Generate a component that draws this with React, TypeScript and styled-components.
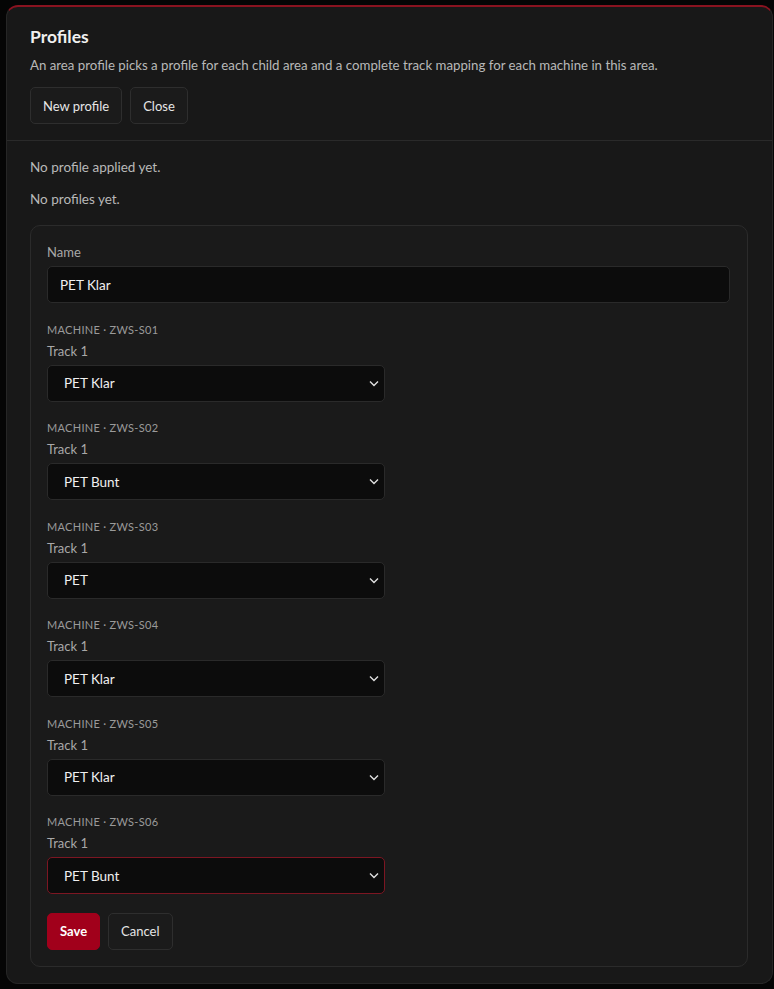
import React from "react";
import styled, { createGlobalStyle } from "styled-components";

const GlobalStyle = createGlobalStyle`
  html, body {
    margin: 0;
    padding: 0;
    background: #050505;
    font-family: Lato, "Noto Sans", sans-serif;
    -webkit-font-smoothing: antialiased;
  }
  * { box-sizing: border-box; }
`;

const Backdrop = styled.div`
  min-height: 989px;
  padding: 5px 1px 6px 6px;
  background: #050505;
`;

const Modal = styled.div`
  background: #181818;
  border: 1px solid #262626;
  border-top: 2px solid #8a1320;
  border-radius: 12px;
  color: #e8e8e8;
`;

const Header = styled.div`
  padding: 18px 23px 16px;
  border-bottom: 1px solid #2a2a2a;
`;

const Title = styled.h2`
  margin: 0;
  font-size: 17.5px;
  line-height: 24px;
  font-weight: 700;
  color: #f0f0f0;
`;

const Description = styled.p`
  margin: 6px 0 12px;
  font-size: 13.25px;
  line-height: 20px;
  color: #b8b8b8;
`;

const Row = styled.div`
  display: flex;
  gap: 8px;
`;

const Button = styled.button<{ $primary?: boolean }>`
  height: 37px;
  padding: 0 12px;
  border-radius: 5px;
  font-family: inherit;
  font-size: 13px;
  font-weight: ${(p) => (p.$primary ? 700 : 400)};
  color: ${(p) => (p.$primary ? "#fff" : "#e6e6e6")};
  background: ${(p) => (p.$primary ? "#a1001b" : "#1b1b1b")};
  border: 1px solid ${(p) => (p.$primary ? "#a1001b" : "#2e2e2e")};
  cursor: pointer;
`;

const Body = styled.div`
  padding: 16px 24px 16px 23px;
  display: flex;
  flex-direction: column;
  gap: 12px;
`;

const Muted = styled.p`
  margin: 0;
  font-size: 13.5px;
  line-height: 20px;
  color: #b8b8b8;
`;

const Card = styled.div`
  margin-top: 4px;
  background: #1a1a1a;
  border: 1px solid #2b2b2b;
  border-radius: 10px;
  padding: 17px 17px 16px 16px;
  display: flex;
  flex-direction: column;
  gap: 18.5px;
`;

const Field = styled.div`
  display: flex;
  flex-direction: column;
  gap: 5px;
`;

const MachineLabel = styled.div`
  font-size: 11px;
  line-height: 16px;
  letter-spacing: 0.3px;
  text-transform: uppercase;
  color: #9a9a9a;
  margin-bottom: -1px;
`;

const Label = styled.label`
  font-size: 13px;
  line-height: 18px;
  color: #a8a8a8;
`;

const Input = styled.input`
  height: 37px;
  width: 100%;
  padding: 0 12px;
  background: #0c0c0c;
  border: 1px solid #2a2a2a;
  border-radius: 5px;
  color: #f0f0f0;
  font-family: inherit;
  font-size: 13.5px;
  outline: none;
`;

const SelectWrap = styled.div`
  position: relative;
  width: 338px;
`;

const Select = styled.select<{ $active?: boolean }>`
  appearance: none;
  -webkit-appearance: none;
  height: 37px;
  width: 100%;
  padding: 0 16px;
  background: #0c0c0c;
  border: 1px solid ${(p) => (p.$active ? "#7c1622" : "#2a2a2a")};
  border-radius: 5px;
  color: #f0f0f0;
  font-family: inherit;
  font-size: 13.5px;
  outline: none;
`;

const Chevron = styled.svg`
  position: absolute;
  right: 6px;
  top: 15px;
  pointer-events: none;
`;

const Actions = styled.div`
  display: flex;
  gap: 8px;
`;

const options = ["PET Klar", "PET Bunt", "PET"];

const machines = [
  { id: "ZWS-S01", value: "PET Klar" },
  { id: "ZWS-S02", value: "PET Bunt" },
  { id: "ZWS-S03", value: "PET" },
  { id: "ZWS-S04", value: "PET Klar" },
  { id: "ZWS-S05", value: "PET Klar" },
  { id: "ZWS-S06", value: "PET Bunt" },
];

export default function App() {
  return (
    <>
      <GlobalStyle />
      <Backdrop>
        <Modal>
          <Header>
            <Title>Profiles</Title>
            <Description>
              An area profile picks a profile for each child area and a complete track mapping for each machine in this area.
            </Description>
            <Row>
              <Button>New profile</Button>
              <Button>Close</Button>
            </Row>
          </Header>
          <Body>
            <Muted>No profile applied yet.</Muted>
            <Muted>No profiles yet.</Muted>
            <Card>
              <Field>
                <Label>Name</Label>
                <Input defaultValue="PET Klar" />
              </Field>
              {machines.map((m, i) => (
                <Field key={m.id}>
                  <MachineLabel>Machine · {m.id}</MachineLabel>
                  <Label>Track 1</Label>
                  <SelectWrap>
                    <Select defaultValue={m.value} $active={i === machines.length - 1}>
                      {options.map((o) => (
                        <option key={o}>{o}</option>
                      ))}
                    </Select>
                    <Chevron width="10" height="7" viewBox="0 0 10 7">
                      <path d="M1 1.5 L5 5.5 L9 1.5" fill="none" stroke="#e0e0e0" strokeWidth="1.4" />
                    </Chevron>
                  </SelectWrap>
                </Field>
              ))}
              <Actions>
                <Button $primary>Save</Button>
                <Button>Cancel</Button>
              </Actions>
            </Card>
          </Body>
        </Modal>
      </Backdrop>
    </>
  );
}
